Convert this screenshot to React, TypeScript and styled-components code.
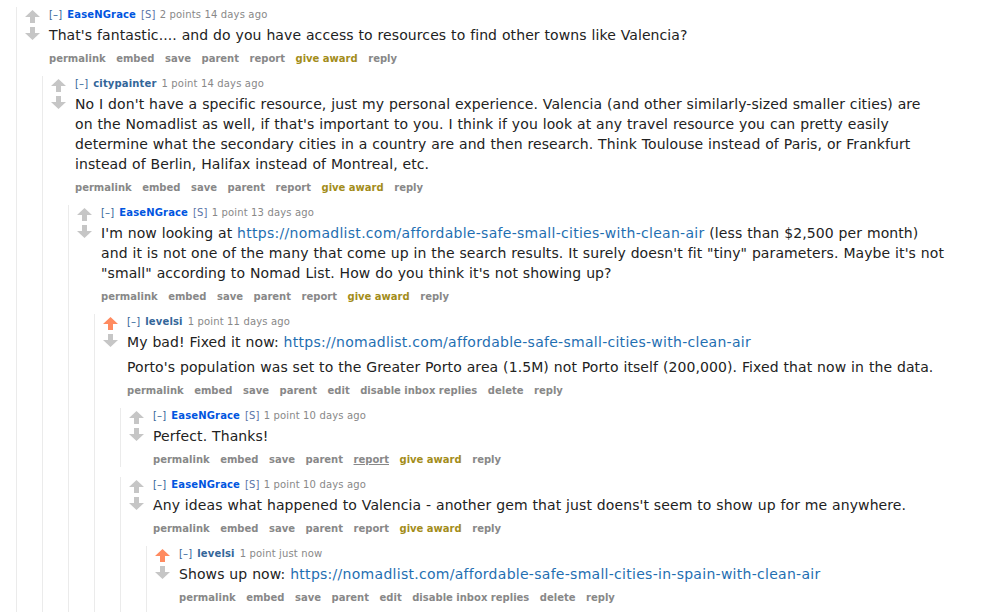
import React from "react";
import styled, { createGlobalStyle } from "styled-components";

const GlobalStyle = createGlobalStyle`
  html, body { margin: 0; padding: 0; background: #ffffff; }
  body { font-family: "DejaVu Sans", Verdana, sans-serif; color: #222222; }
`;

type Btn = { label: string; award?: boolean; underline?: boolean };

type CommentData = {
  author: string;
  authorKind: "submitter" | "plain";
  score: string;
  time: string;
  upvoted?: boolean;
  paragraphs: React.ReactNode[];
  own?: boolean;
  underlineReport?: boolean;
  children?: CommentData[];
};

const Page = styled.div`
  padding: 7px 0 0 16px;
`;

const CommentBox = styled.div<{ $nested: boolean; $tail: boolean }>`
  border-left: 1px solid #ebebeb;
  padding-left: 8px;
  margin-top: ${(p) => (p.$nested ? "10px" : "0")};
  padding-bottom: ${(p) => (p.$tail ? "40px" : "0")};
`;

const Main = styled.div`
  display: flex;
  align-items: flex-start;
`;

const Arrows = styled.div`
  flex: none;
  width: 15px;
  margin-right: 9px;
  padding-top: 3px;
  display: flex;
  flex-direction: column;
  gap: 4px;
`;

const Entry = styled.div`
  flex: 1;
  min-width: 0;
`;

const Tagline = styled.div`
  font-size: 10px;
  line-height: 15px;
  letter-spacing: 0.15px;
  color: #888888;
  white-space: nowrap;
`;

const Expand = styled.span`
  color: #336699;
  margin-right: 5px;
`;

const Author = styled.span<{ $submitter: boolean }>`
  font-weight: bold;
  color: ${(p) => (p.$submitter ? "#0055df" : "#336699")};
  margin-right: 5px;
`;

const Flag = styled.span`
  color: #5a74a8;
  margin-right: 4px;
`;

const Score = styled.span`
  color: #888888;
`;

const Body = styled.div`
  max-width: 847px;
  padding: 3px 0;
  font-size: 14px;
  line-height: 20px;
  letter-spacing: 0.09px;
  word-spacing: 0.3px;
  color: #222222;
  p {
    margin: 0;
  }
  p + p {
    margin-top: 5px;
  }
`;

const Link = styled.a`
  color: #1f6fb2;
  text-decoration: none;
  letter-spacing: 0.28px;
`;

const Buttons = styled.ul`
  list-style: none;
  margin: 0;
  padding: 4px 0 0 0;
  display: flex;
  gap: 10.5px;
  font-size: 10px;
  line-height: 14px;
  font-weight: bold;
  white-space: nowrap;
`;

const ButtonItem = styled.li<{ $award: boolean; $underline: boolean }>`
  color: ${(p) => (p.$award ? "#a38d1a" : "#888888")};
  text-decoration: ${(p) => (p.$underline ? "underline" : "none")};
`;

const Children = styled.div`
  margin-left: 17px;
`;

const Arrow: React.FC<{ dir: "up" | "down"; active?: boolean }> = ({ dir, active }) => (
  <svg width="15" height="13" viewBox="0 0 15 13" style={{ display: "block" }}>
    <polygon
      points="7.5,0 15,7 10,7 10,13 5,13 5,7 0,7"
      fill={active ? "#ff8b60" : "#c6c6c6"}
      transform={dir === "down" ? "rotate(180 7.5 6.5)" : undefined}
    />
  </svg>
);

const otherButtons = (underlineReport?: boolean): Btn[] => [
  { label: "permalink" },
  { label: "embed" },
  { label: "save" },
  { label: "parent" },
  { label: "report", underline: underlineReport },
  { label: "give award", award: true },
  { label: "reply" },
];

const ownButtons: Btn[] = [
  { label: "permalink" },
  { label: "embed" },
  { label: "save" },
  { label: "parent" },
  { label: "edit" },
  { label: "disable inbox replies" },
  { label: "delete" },
  { label: "reply" },
];

const thread: CommentData = {
  author: "EaseNGrace",
  authorKind: "submitter",
  score: "2 points",
  time: "14 days ago",
  paragraphs: [
    "That's fantastic.... and do you have access to resources to find other towns like Valencia?",
  ],
  children: [
    {
      author: "citypainter",
      authorKind: "plain",
      score: "1 point",
      time: "14 days ago",
      paragraphs: [
        "No I don't have a specific resource, just my personal experience. Valencia (and other similarly-sized smaller cities) are on the Nomadlist as well, if that's important to you. I think if you look at any travel resource you can pretty easily determine what the secondary cities in a country are and then research. Think Toulouse instead of Paris, or Frankfurt instead of Berlin, Halifax instead of Montreal, etc.",
      ],
      children: [
        {
          author: "EaseNGrace",
          authorKind: "submitter",
          score: "1 point",
          time: "13 days ago",
          paragraphs: [
            <>
              I'm now looking at{" "}
              <Link href="#">https://nomadlist.com/affordable-safe-small-cities-with-clean-air</Link>{" "}
              (less than $2,500 per month) and it is not one of the many that come up in the search
              results. It surely doesn't fit "tiny" parameters. Maybe it's not "small" according to
              Nomad List. How do you think it's not showing up?
            </>,
          ],
          children: [
            {
              author: "levelsi",
              authorKind: "plain",
              score: "1 point",
              time: "11 days ago",
              upvoted: true,
              own: true,
              paragraphs: [
                <>
                  My bad! Fixed it now:{" "}
                  <Link href="#">https://nomadlist.com/affordable-safe-small-cities-with-clean-air</Link>
                </>,
                "Porto's population was set to the Greater Porto area (1.5M) not Porto itself (200,000). Fixed that now in the data.",
              ],
              children: [
                {
                  author: "EaseNGrace",
                  authorKind: "submitter",
                  score: "1 point",
                  time: "10 days ago",
                  underlineReport: true,
                  paragraphs: ["Perfect. Thanks!"],
                },
                {
                  author: "EaseNGrace",
                  authorKind: "submitter",
                  score: "1 point",
                  time: "10 days ago",
                  paragraphs: [
                    "Any ideas what happened to Valencia - another gem that just doens't seem to show up for me anywhere.",
                  ],
                  children: [
                    {
                      author: "levelsi",
                      authorKind: "plain",
                      score: "1 point",
                      time: "just now",
                      upvoted: true,
                      own: true,
                      paragraphs: [
                        <>
                          Shows up now:{" "}
                          <Link href="#">
                            https://nomadlist.com/affordable-safe-small-cities-in-spain-with-clean-air
                          </Link>
                        </>,
                      ],
                    },
                  ],
                },
              ],
            },
          ],
        },
      ],
    },
  ],
};

const Comment: React.FC<{ data: CommentData; nested: boolean; tail: boolean }> = ({
  data,
  nested,
  tail,
}) => {
  const buttons = data.own ? ownButtons : otherButtons(data.underlineReport);
  const kids = data.children ?? [];
  return (
    <CommentBox $nested={nested} $tail={tail && kids.length === 0}>
      <Main>
        <Arrows>
          <Arrow dir="up" active={data.upvoted} />
          <Arrow dir="down" />
        </Arrows>
        <Entry>
          <Tagline>
            <Expand>[–]</Expand>
            <Author $submitter={data.authorKind === "submitter"}>{data.author}</Author>
            {data.authorKind === "submitter" && <Flag>[S]</Flag>}
            <Score>
              {data.score} {data.time}
            </Score>
          </Tagline>
          <Body>
            {data.paragraphs.map((p, i) => (
              <p key={i}>{p}</p>
            ))}
          </Body>
          <Buttons>
            {buttons.map((b) => (
              <ButtonItem key={b.label} $award={!!b.award} $underline={!!b.underline}>
                {b.label}
              </ButtonItem>
            ))}
          </Buttons>
        </Entry>
      </Main>
      {kids.length > 0 && (
        <Children>
          {kids.map((k, i) => (
            <Comment key={i} data={k} nested tail={tail && i === kids.length - 1} />
          ))}
        </Children>
      )}
    </CommentBox>
  );
};

export default function App() {
  return (
    <>
      <GlobalStyle />
      <Page>
        <Comment data={thread} nested={false} tail />
      </Page>
    </>
  );
}
